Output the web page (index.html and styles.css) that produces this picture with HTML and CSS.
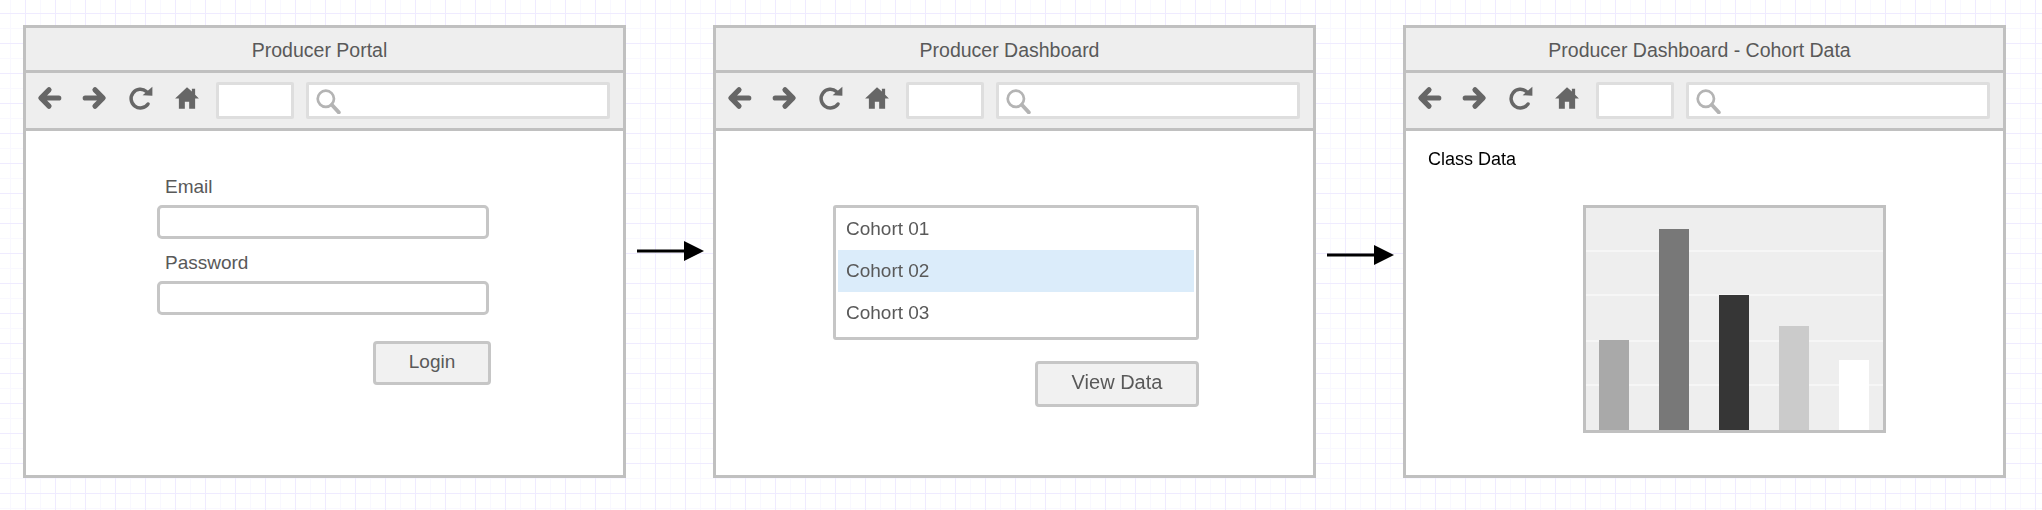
FILE: index.html
```html
<!DOCTYPE html>
<html lang="en">
<head>
<meta charset="UTF-8" />
<title>Producer Portal wireframe</title>
<link rel="stylesheet" href="styles.css">
</head>
<body>
  <svg class="defs" width="0" height="0" aria-hidden="true">
    <symbol id="icon-back" viewBox="0 0 24 24">
      <path d="M21 12H6M12 4.500 4.500 12l7.500 7.500" fill="none" stroke="currentColor" stroke-width="4.800" stroke-linejoin="round" stroke-linecap="round"/>
    </symbol>
    <symbol id="icon-forward" viewBox="0 0 24 24">
      <path d="M3 12h15M12 4.500 19.500 12 12 19.500" fill="none" stroke="currentColor" stroke-width="4.800" stroke-linejoin="round" stroke-linecap="round"/>
    </symbol>
    <symbol id="icon-reload" viewBox="0 0 24 24">
      <path d="M18.500 17.500A8.600 8.600 0 1 1 17 6" fill="none" stroke="currentColor" stroke-width="3.200" stroke-linecap="round"/>
      <path d="M13.500 9.500 22.500 10V1.500Z" fill="currentColor"/>
    </symbol>
    <symbol id="icon-home" viewBox="0 0 24 24">
      <path d="M12 2 1 12.500h3.500V22h5.500v-6.500h4V22h5.500v-9.500H23L19.500 9V3.500h-3V6Z" fill="currentColor"/>
    </symbol>
    <symbol id="icon-search" viewBox="0 0 24 24">
      <circle cx="10" cy="10" r="7.500" fill="none" stroke="currentColor" stroke-width="2.500"/>
      <path d="m15.500 15.500 6.500 7" fill="none" stroke="currentColor" stroke-width="3.500" stroke-linecap="round"/>
    </symbol>
  </svg>

  <main class="canvas">
    <section class="window">
      <header class="titlebar">Producer Portal</header>
      <div class="toolbar">
        <svg class="tool tool-back"><use href="#icon-back"/></svg>
        <svg class="tool tool-forward"><use href="#icon-forward"/></svg>
        <svg class="tool tool-reload"><use href="#icon-reload"/></svg>
        <svg class="tool tool-home"><use href="#icon-home"/></svg>
        <div class="addr"></div>
        <div class="search"><svg class="search-icon"><use href="#icon-search"/></svg></div>
      </div>
      <div class="page page-login">
        <div class="field-label">Email</div>
        <div class="input"></div>
        <div class="field-label field-label-next">Password</div>
        <div class="input"></div>
        <div class="actions"><div class="btn btn-login">Login</div></div>
      </div>
    </section>

    <svg class="arrow arrow-one" viewBox="0 0 87 24"><path d="M11 12H60" stroke="#000" stroke-width="3"/><path d="M58 2 78 12 58 22Z" fill="#000"/></svg>

    <section class="window">
      <header class="titlebar">Producer Dashboard</header>
      <div class="toolbar">
        <svg class="tool tool-back"><use href="#icon-back"/></svg>
        <svg class="tool tool-forward"><use href="#icon-forward"/></svg>
        <svg class="tool tool-reload"><use href="#icon-reload"/></svg>
        <svg class="tool tool-home"><use href="#icon-home"/></svg>
        <div class="addr"></div>
        <div class="search"><svg class="search-icon"><use href="#icon-search"/></svg></div>
      </div>
      <div class="page page-cohorts">
        <ul class="cohorts">
          <li>Cohort 01</li>
          <li class="selected">Cohort 02</li>
          <li>Cohort 03</li>
        </ul>
        <div class="btn btn-view">View Data</div>
      </div>
    </section>

    <svg class="arrow arrow-two" viewBox="0 0 87 24"><path d="M11 12H60" stroke="#000" stroke-width="3"/><path d="M58 2 78 12 58 22Z" fill="#000"/></svg>

    <section class="window">
      <header class="titlebar">Producer Dashboard - Cohort Data</header>
      <div class="toolbar">
        <svg class="tool tool-back"><use href="#icon-back"/></svg>
        <svg class="tool tool-forward"><use href="#icon-forward"/></svg>
        <svg class="tool tool-reload"><use href="#icon-reload"/></svg>
        <svg class="tool tool-home"><use href="#icon-home"/></svg>
        <div class="addr"></div>
        <div class="search"><svg class="search-icon"><use href="#icon-search"/></svg></div>
      </div>
      <div class="page page-chart">
        <div class="chart-title">Class Data</div>
        <div class="chart">
          <div class="bar bar-a"></div>
          <div class="bar bar-b"></div>
          <div class="bar bar-c"></div>
          <div class="bar bar-d"></div>
          <div class="bar bar-e"></div>
        </div>
      </div>
    </section>
  </main>
</body>
</html>
```

FILE: styles.css
```css
* {
  box-sizing: border-box;
}
html, body {
  height: 100%;
}
body {
  margin: 0;
  font-family: 'Liberation Sans', Arial, sans-serif;
  overflow: hidden;
  background-color: #fff;
  background-image:
    linear-gradient(to right, #efebff 1px, transparent 1px),
    linear-gradient(to bottom, #efebff 1px, transparent 1px),
    linear-gradient(to right, #f9f8ff 1px, transparent 1px),
    linear-gradient(to bottom, #f9f8ff 1px, transparent 1px);
  background-size: 30px 30px, 30px 30px, 15px 15px, 15px 15px;
  background-position: 25px 13px, 25px 13px, 10px 13px, 25px 13px;
}
.defs {
  position: absolute;
}
.canvas {
  display: flex;
  align-items: flex-start;
  padding: 25px 0 0 23px;
  filter: blur(0.4px);
}

/* browser window */
.window {
  width: 603px;
  height: 453px;
  flex: none;
  display: flex;
  flex-direction: column;
  background: #fff;
  border: 3px solid #c0c0c0;
}
.titlebar {
  height: 45px;
  flex: none;
  display: flex;
  align-items: center;
  justify-content: center;
  padding: 3px 10px 0 0;
  background: #eee;
  border-bottom: 3px solid #c0c0c0;
  font-size: 19.5px;
  color: #595959;
}
.toolbar {
  height: 58px;
  flex: none;
  display: flex;
  align-items: center;
  padding: 0 13px 0 10px;
  background: #eee;
  border-bottom: 3px solid #c0c0c0;
  color: #666;
}
.tool {
  width: 26px;
  height: 26px;
  flex: none;
  margin-top: -5px;
}
.tool-forward { margin-left: 20px; }
.tool-reload { margin-left: 20px; }
.tool-home { margin-left: 20px; }
.addr {
  width: 78px;
  height: 37px;
  margin-left: 16px;
  flex: none;
  background: #fff;
  border: 3px solid #dedede;
  border-radius: 2px;
}
.search {
  flex: 1;
  height: 37px;
  margin-left: 12px;
  display: flex;
  align-items: center;
  padding-left: 6px;
  background: #fff;
  border: 3px solid #dedede;
  border-radius: 2px;
}
.search-icon {
  width: 26px;
  height: 26px;
  color: #b4b4b4;
}
.page {
  flex: 1;
  color: #595959;
  font-size: 19px;
}

/* login */
.page-login {
  padding: 43px 0 0 131px;
}
.field-label {
  height: 26px;
  padding-left: 8px;
  line-height: 26px;
}
.field-label-next {
  margin-top: 11px;
}
.input {
  width: 332px;
  height: 34px;
  margin-top: 5px;
  background: #fff;
  border: 3px solid #c6c6c6;
  border-radius: 5px;
}
.actions {
  width: 334px;
  margin-top: 26px;
  display: flex;
  justify-content: flex-end;
}
.btn {
  display: flex;
  align-items: center;
  justify-content: center;
  background: #f1f1f1;
  border: 3px solid #c6c6c6;
  border-radius: 4px;
}
.btn-login {
  width: 118px;
  height: 44px;
  padding-bottom: 2px;
}

/* cohort list */
.page-cohorts {
  padding: 74px 0 0 117px;
}
.cohorts {
  width: 366px;
  height: 135px;
  margin: 0;
  padding: 0 2px;
  list-style: none;
  background: #fff;
  border: 3px solid #c6c6c6;
  border-radius: 3px;
}
.cohorts li {
  height: 42px;
  padding-left: 8px;
  line-height: 41px;
}
.cohorts .selected {
  background: #dbecfa;
}
.btn-view {
  width: 164px;
  height: 46px;
  margin: 21px 0 0 202px;
  padding-bottom: 3px;
  font-size: 20px;
}

/* chart */
.page-chart {
  padding: 16px 0 0 22px;
}
.chart-title {
  height: 24px;
  line-height: 24px;
  font-size: 18px;
  color: #000;
}
.chart {
  position: relative;
  width: 303px;
  height: 228px;
  margin: 34px 0 0 155px;
  display: flex;
  align-items: flex-end;
  gap: 30px;
  padding: 0 12px 0 13px;
  border: 3px solid #c0c0c0;
  background-color: #eee;
  background-image: linear-gradient(to bottom, transparent 42px, #f6f6f6 42px, #f6f6f6 44px, transparent 44px, transparent 86px, #f6f6f6 86px, #f6f6f6 88px, transparent 88px, transparent 132px, #f6f6f6 132px, #f6f6f6 134px, transparent 134px, transparent 176px, #f6f6f6 176px, #f6f6f6 178px, transparent 178px);
}
.bar {
  width: 30px;
  flex: none;
}
.bar-a { height: 90px; background: #a9a9a9; }
.bar-b { height: 201px; background: #787878; }
.bar-c { height: 135px; background: #363636; }
.bar-d { height: 104px; background: #cbcbcb; }
.bar-e { height: 70px; background: #fff; }

/* arrows between windows */
.arrow {
  width: 87px;
  height: 24px;
  flex: none;
}
.arrow-one { margin-top: 214px; }
.arrow-two { margin-top: 218px; }
```
